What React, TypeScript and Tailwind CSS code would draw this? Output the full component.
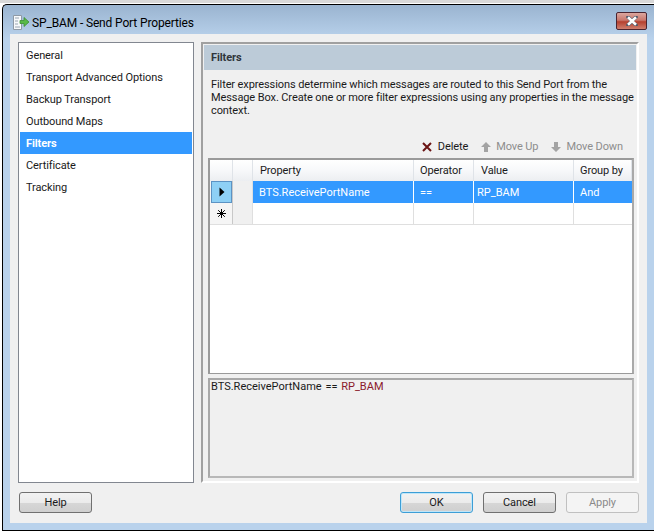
const font = "[font-family:Roboto,'Liberation_Sans',sans-serif]";

function TitleIcon() {
  return (
    <svg width="18" height="17" viewBox="0 0 18 17" className="shrink-0">
      <path d="M1.5 1.5h8v14h-8z" fill="#f7f9fb" stroke="#8f9aa6" />
      <path d="M3 4h4M3 7h3M3 10h3M3 13h5" stroke="#9aa6b2" />
      <path d="M8 6.5h4V3.5l5 4.5-5 4.5V9.5H8z" fill="#58b947" stroke="#3d8f34" strokeWidth="0.8" />
    </svg>
  );
}

function CloseButton() {
  return (
    <div className="flex h-[18px] w-[31px] items-center justify-center rounded-[2px] border border-[#4a2430] bg-[linear-gradient(180deg,#dba79f_0%,#c9776c_45%,#b5402f_55%,#cf7f6e_100%)]">
      <svg width="12" height="10" viewBox="0 0 12 10">
        <path d="M2 1l8 8M10 1l-8 8" stroke="#4d5868" strokeWidth="3.6" strokeLinecap="round" />
        <path d="M2 1.2l8 7.6M10 1.2l-8 7.6" stroke="#ffffff" strokeWidth="2.6" />
      </svg>
    </div>
  );
}

function NavList() {
  const items = ["General", "Transport Advanced Options", "Backup Transport", "Outbound Maps", "Filters", "Certificate", "Tracking"];
  return (
    <div className="flex w-[176px] shrink-0 flex-col border border-[#828790] bg-white p-[1px]">
      {items.map((t) => (
        <div
          key={t}
          className={
            t === "Filters"
              ? "flex h-[22px] items-center bg-[#3399ff] pt-[2px] pl-[6px] font-bold text-white"
              : "flex h-[22px] items-center pt-[2px] pl-[6px] text-[#1a1a1a]"
          }
        >
          {t}
        </div>
      ))}
    </div>
  );
}

function ToolButton({ label, disabled, icon }: { label: string; disabled?: boolean; icon: React.ReactNode }) {
  return (
    <div className={disabled ? "flex items-center gap-[5px] text-[#8d8d8d]" : "flex items-center gap-[6px] text-[#1a1a1a]"}>
      {icon}
      <span>{label}</span>
    </div>
  );
}

function HeaderCell({ label, className }: { label: string; className: string }) {
  return (
    <div className={`flex h-full items-center border-r border-[#dfe3e8] bg-[linear-gradient(180deg,#ffffff_0%,#f7f8fa_50%,#eceef1_100%)] pt-[2px] ${className}`}>
      {label}
    </div>
  );
}

function Grid() {
  return (
    <div className="flex h-[216px] shrink-0 flex-col border-2 border-b border-[#9a9a9a] border-r-[#a9a9a9] bg-white">
      <div className="flex h-[21px] text-[#1a1a1a]">
        <HeaderCell label="" className="w-[23px]" />
        <HeaderCell label="" className="w-[20px]" />
        <HeaderCell label="Property" className="w-[161px] pl-[7px]" />
        <HeaderCell label="Operator" className="w-[60px] pl-[6px]" />
        <HeaderCell label="Value" className="w-[100px] pl-[7px]" />
        <HeaderCell label="Group by" className="flex-1 pl-[6px]" />
      </div>
      <div className="flex h-[22px] tracking-normal text-white">
        <div className="h-full w-[23px] border-r border-[#c8c8c8] bg-[#f5f5f5] pl-[1px]">
          <div className="flex h-full w-[21px] items-center justify-center border border-[#5c93c4] bg-[#8ed0f5]">
            <svg width="6" height="10" viewBox="0 0 6 10">
              <path d="M0.5 0.5L5.5 5 0.5 9.5z" fill="#000000" />
            </svg>
          </div>
        </div>
        <div className="h-full w-[20px] border-r border-[#dfdfdf] bg-[#f0f0f0]" />
        <div className="flex h-full w-[161px] items-center border-r border-white bg-[#3399ff] pt-[2px] pl-[6px]">BTS.ReceivePortName</div>
        <div className="flex h-full w-[60px] items-center border-r border-white bg-[#3399ff] pt-[2px] pl-[6px]">==</div>
        <div className="flex h-full w-[100px] items-center border-r border-white bg-[#3399ff] pt-[2px] pl-[3px]">RP_BAM</div>
        <div className="flex h-full flex-1 items-center bg-[#3399ff] pt-[2px] pl-[6px]">And</div>
      </div>
      <div className="flex h-[22px] border-b border-[#dfdfdf]">
        <div className="flex h-full w-[23px] items-center justify-center border-r border-[#c8c8c8] bg-[#f5f5f5]">
          <svg width="9" height="9" viewBox="0 0 9 9">
            <path d="M4.5 0v9M0 4.5h9M1.2 1.2l6.6 6.6M7.8 1.2L1.2 7.8" stroke="#000000" strokeWidth="1" />
          </svg>
        </div>
        <div className="h-full w-[20px] border-r border-[#dfdfdf] bg-[#f0f0f0]" />
        <div className="h-full w-[161px] border-r border-[#dfdfdf]" />
        <div className="h-full w-[60px] border-r border-[#dfdfdf]" />
        <div className="h-full w-[100px] border-r border-[#dfdfdf]" />
        <div className="h-full flex-1" />
      </div>
    </div>
  );
}

function FiltersPanel() {
  return (
    <div className="flex min-w-0 flex-1 flex-col border-2 border-[#a0a0a0] border-r-white border-b-white pr-[1px] pb-[3px] pl-[1px] pt-[1px]">
      <div className="flex h-[25px] shrink-0 items-center bg-[#bccbd8] pt-[2px] pl-[7px] font-bold text-[#30363c]">Filters</div>
      <div className="flex min-h-0 flex-1 flex-col pr-[2px] pl-[4px]">
        <p className="mt-[8px] h-[44px] shrink-0 pl-[3px] leading-[13px] text-[#1a1a1a]">
          Filter expressions determine which messages are routed to this Send Port from the Message Box. Create one or more filter expressions using any properties in the message context.
        </p>
        <div className="mt-[15px] mb-[1px] flex h-[20px] shrink-0 items-center justify-end gap-[13px] pr-[11px]">
          <ToolButton
            label="Delete"
            icon={
              <svg width="10" height="10" viewBox="0 0 10 10">
                <path d="M1 1l8 8M9 1L1 9" stroke="#6b1414" strokeWidth="2" />
              </svg>
            }
          />
          <ToolButton
            label="Move Up"
            disabled
            icon={
              <svg width="10" height="10" viewBox="0 0 10 10">
                <path d="M5 0L10 5H7V10H3V5H0z" fill="#a3a3a3" />
              </svg>
            }
          />
          <ToolButton
            label="Move Down"
            disabled
            icon={
              <svg width="10" height="10" viewBox="0 0 10 10">
                <path d="M5 10L0 5h3V0h4v5h3z" fill="#a3a3a3" />
              </svg>
            }
          />
        </div>
        <Grid />
        <div className="mt-[4px] flex-1 border-2 border-[#a8a8a8] border-r-[#b8b8b8] border-b-[#b8b8b8] bg-[#f0f0f0] pl-[1px] leading-[13px] tracking-normal text-[#1a1a1a]">
          BTS.ReceivePortName <span className="mx-[1px]">==</span> <span className="text-[#8b1a2b]">RP_BAM</span>
        </div>
      </div>
    </div>
  );
}

function DialogButton({ label, variant }: { label: string; variant?: "default" | "disabled" }) {
  const base = "flex h-[21px] w-[73px] items-center justify-center rounded-[3px] border pt-[2px] ";
  const style =
    variant === "default"
      ? "border-[#3c9ed6] bg-[linear-gradient(180deg,#f2f2f2_0%,#ebebeb_50%,#d6d6d6_55%,#cfcfcf_100%)] text-[#1a1a1a] shadow-[inset_0_0_0_1px_#bfe6f9]"
      : variant === "disabled"
        ? "border-[#c0c0c0] bg-[#f4f4f4] text-[#8a8a8a]"
        : "border-[#707070] bg-[linear-gradient(180deg,#f2f2f2_0%,#ebebeb_50%,#d6d6d6_55%,#cfcfcf_100%)] text-[#1a1a1a]";
  return <div className={base + style}>{label}</div>;
}

export default function App() {
  return (
    <div className={`flex h-[532px] w-[654px] flex-col overflow-hidden bg-white text-[11px] tracking-[-0.1px] ${font}`}>
      <div className="h-[3px] shrink-0 bg-[#d9d9d9]" />
      <div className="ml-[2px] mt-[1px] mb-[1px] flex min-h-0 flex-1 flex-col rounded-tl-[5px] border-t border-b border-l border-black bg-[linear-gradient(180deg,#9ab4d0_0px,#b9d2ec_34px)]">
        <div className="flex h-[29px] shrink-0 items-center justify-between pl-[9px] pr-[7px] pt-[2px]">
          <div className="flex items-center gap-[2px] pt-[4px] text-[12px] tracking-[-0.14px] text-black">
            <TitleIcon />
            <span>SP_BAM - Send Port Properties</span>
          </div>
          <CloseButton />
        </div>
        <div className="ml-[7px] mr-[7px] mb-[7px] flex min-h-0 flex-1 flex-col gap-[9px] bg-[#f0f0f0] px-[8px] pt-[8px] pb-[10px]">
          <div className="flex min-h-0 flex-1 gap-[7px]">
            <NavList />
            <FiltersPanel />
          </div>
          <div className="flex items-center justify-between pl-[1px]">
            <DialogButton label="Help" />
            <div className="flex gap-[10px]">
              <DialogButton label="OK" variant="default" />
              <DialogButton label="Cancel" />
              <DialogButton label="Apply" variant="disabled" />
            </div>
          </div>
        </div>
      </div>
    </div>
  );
}
